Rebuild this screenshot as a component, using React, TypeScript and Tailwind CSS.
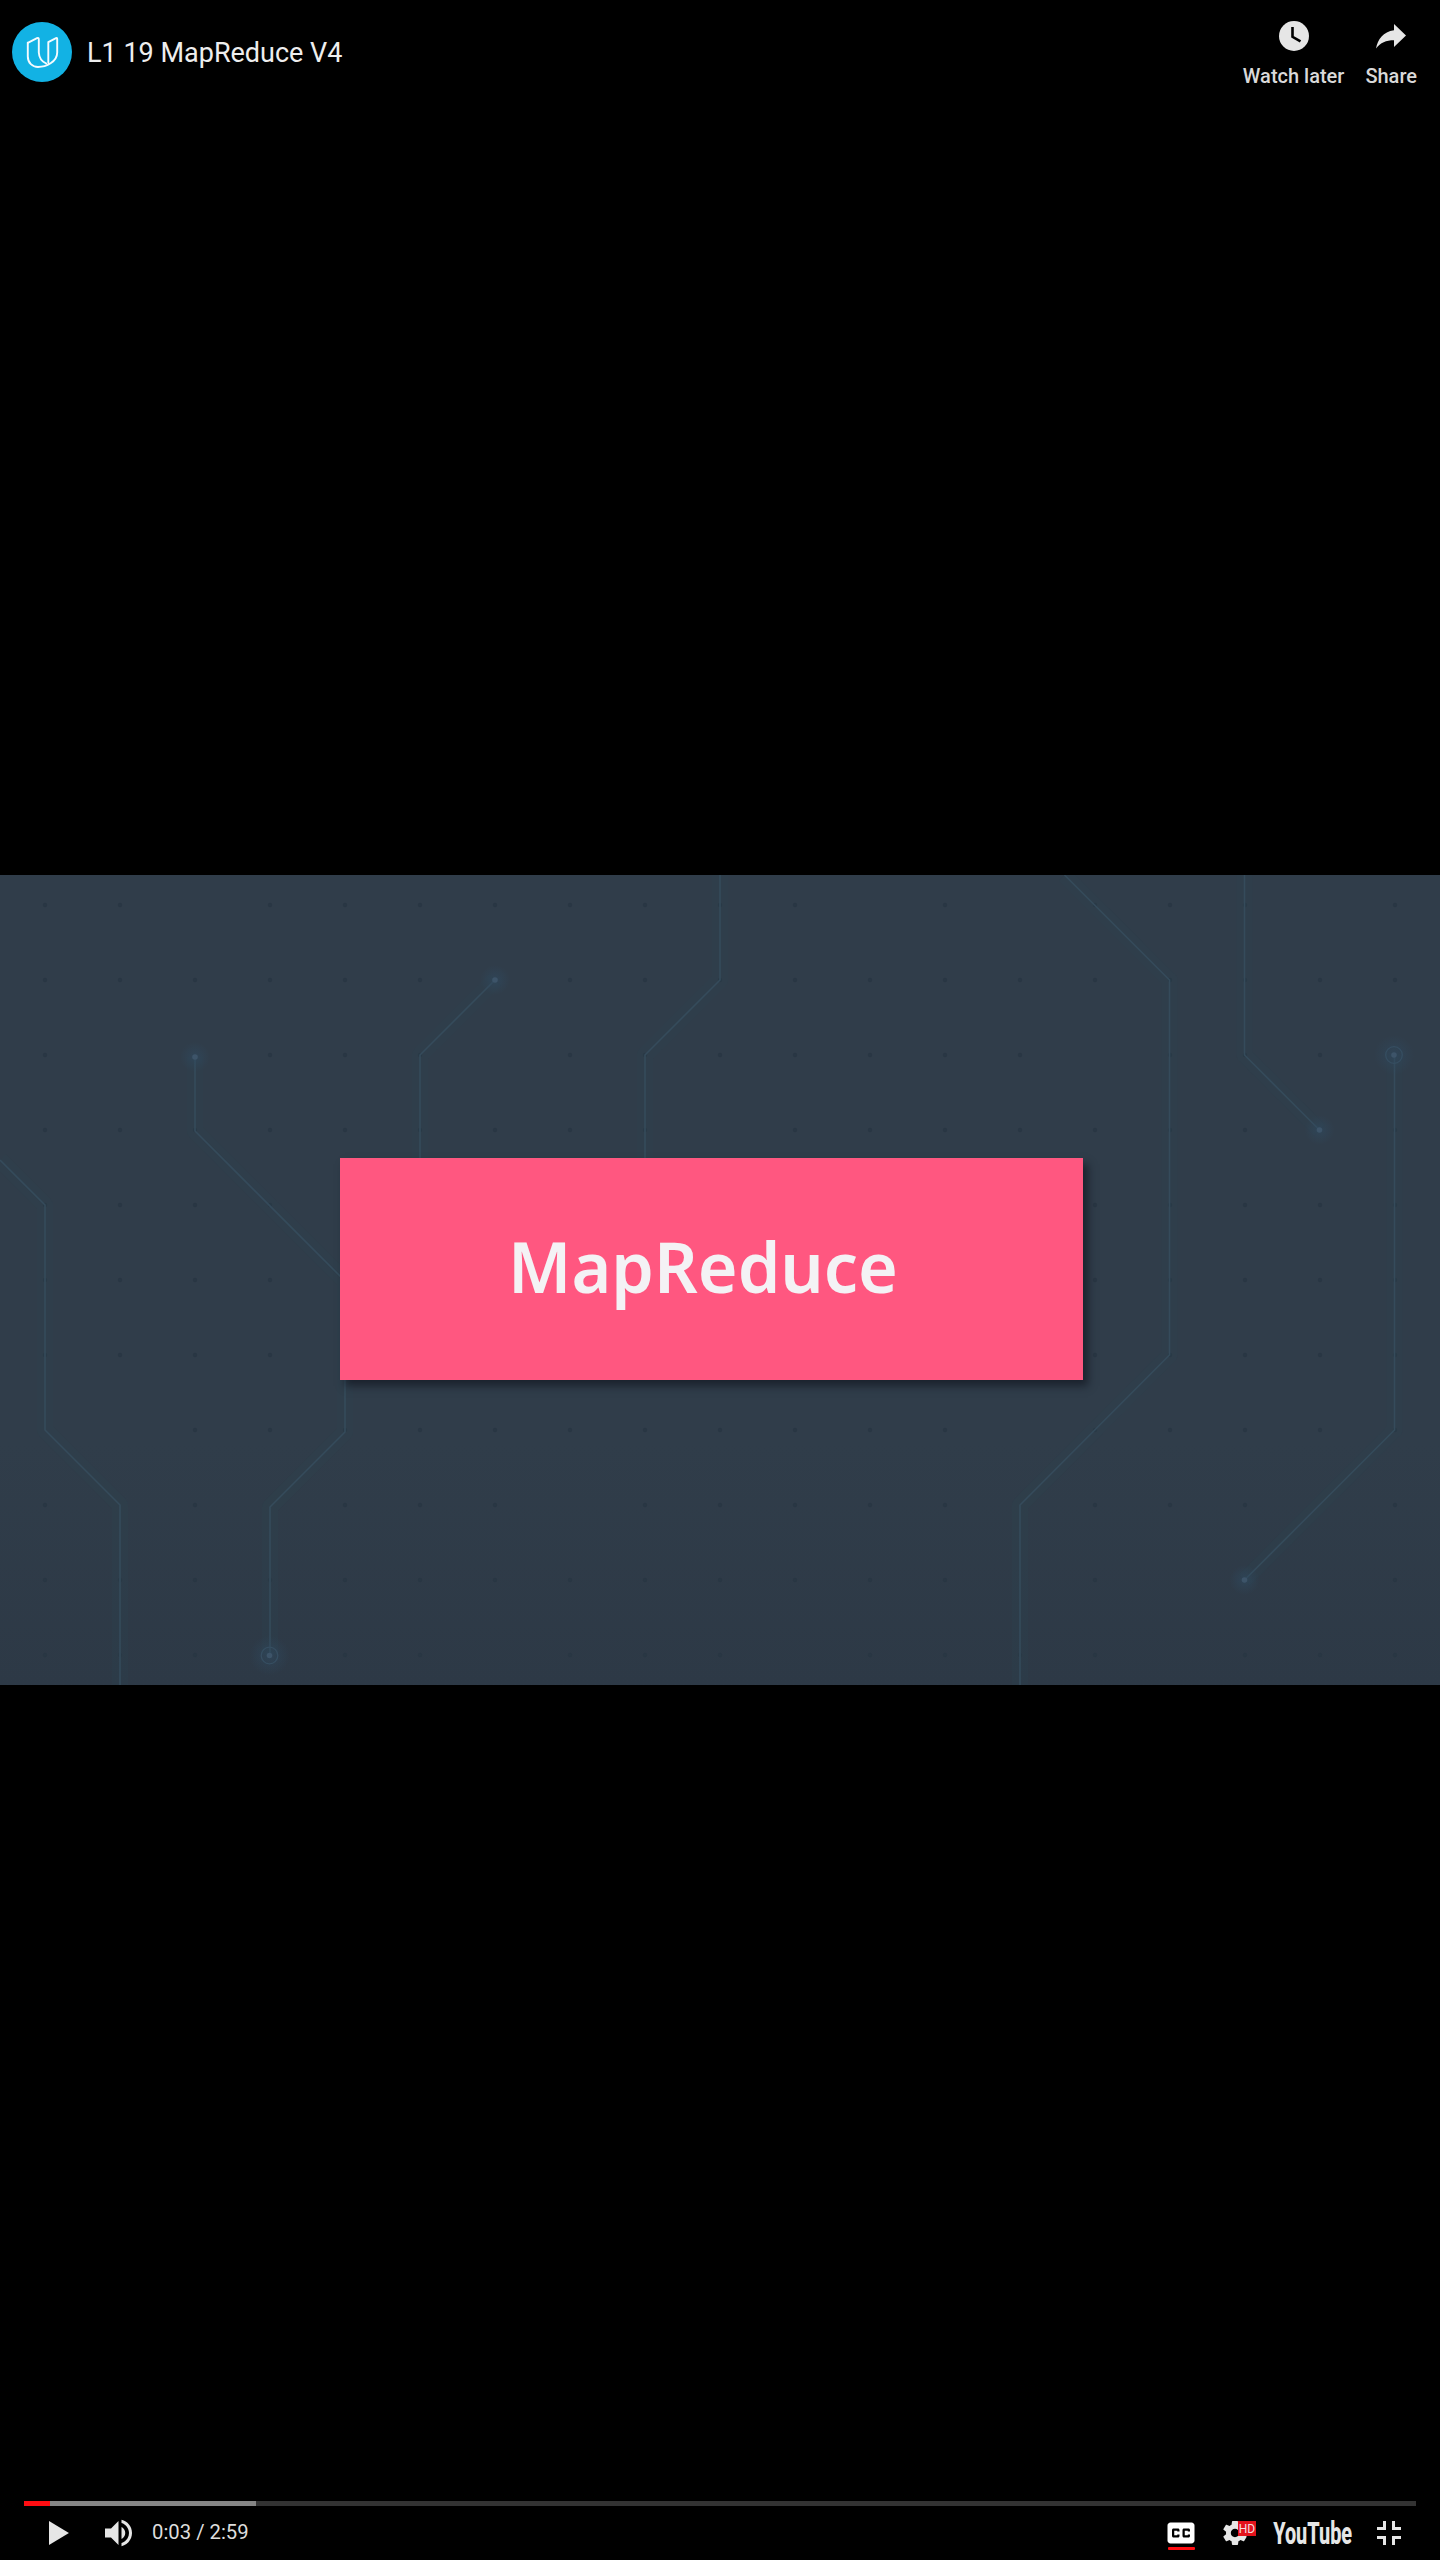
import React from 'react'

const STEP = 75
const COLS = 19
const ROWS = 11

// Grid cells (row -> columns) that carry no dot.
const EMPTY: Record<number, number[]> = {
  0: [2, 11, 13, 17],
  2: [1, 2, 6, 14],
  3: [9],
  7: [0, 1, 13],
  8: [1, 3, 7, 13, 17],
  9: [13, 15, 17],
  10: [6, 10, 15],
}

const TRACES = [
  'M0 285 L45 330 V555 L120 630 V810',
  'M195 182 V256 L345 406 V557 L270 632 V780',
  'M495 105 L420 180 V300',
  'M720 0 V105 L645 180 V300',
  'M1064.5 0 L1169.5 105 V480 L1020 630 V810',
  'M1244.5 0 V180 L1319.5 255',
  'M1394.5 180 V555 L1244.5 705',
]

const NODES = [
  { x: 195, y: 182, ring: false },
  { x: 495, y: 105, ring: false },
  { x: 269.5, y: 780.5, ring: true },
  { x: 1319.5, y: 255, ring: false },
  { x: 1394, y: 180, ring: true },
  { x: 1244.5, y: 705, ring: false },
]

function Circuit() {
  const dots: React.ReactElement[] = []
  for (let r = 0; r < ROWS; r++) {
    for (let c = 0; c < COLS; c++) {
      if (EMPTY[r]?.includes(c)) continue
      dots.push(<circle key={`${r}-${c}`} cx={45 + c * STEP} cy={30 + r * STEP} r="2.2" />)
    }
  }
  return (
    <svg className="absolute inset-0 h-full w-full" viewBox="0 0 1440 810">
      <defs>
        <radialGradient id="glow">
          <stop offset="0" stopColor="#2f4a60" stopOpacity="0.6" />
          <stop offset="1" stopColor="#2f4a60" stopOpacity="0" />
        </radialGradient>
      </defs>
      <g fill="#293744">{dots}</g>
      <g fill="none" strokeLinejoin="round">
        {TRACES.map((d) => (
          <path key={d} d={d} stroke="#2d4250" strokeOpacity="0.25" strokeWidth="16" />
        ))}
        {TRACES.map((d) => (
          <path key={d} d={d} stroke="#354b5b" strokeWidth="1.6" />
        ))}
      </g>
      {NODES.map((n) => (
        <g key={`${n.x}`}>
          <circle cx={n.x} cy={n.y} r={n.ring ? 20 : 15} fill="url(#glow)" />
          {n.ring && <circle cx={n.x} cy={n.y} r="8.3" fill="none" stroke="#364e61" strokeWidth="1.3" />}
          <circle cx={n.x} cy={n.y} r="2.8" fill="#3d5469" />
        </g>
      ))}
    </svg>
  )
}

function ChannelLogo() {
  return (
    <svg viewBox="0 0 60 60" className="h-[60px] w-[60px]">
      <circle cx="30" cy="30" r="30" fill="#12b2e4" />
      <g fill="none" stroke="#f4fbfe" strokeWidth="1.9" strokeLinejoin="round" strokeLinecap="round">
        <path d="M15.8 20.8 L25 16.2 Q26.8 15.4 26.8 17.4 V30.5 Q27.2 38.5 34.4 41.6" />
        <path d="M15.8 20.8 V34.5 C15.8 41 20.5 45 26 45 C34 45 45.2 40 45.2 30.5 V17 Q45.2 15.7 44 16.1 L36.3 20.2 V40.6" />
      </g>
    </svg>
  )
}

function Icon({ d, fill = '#e6e6e6' }: { d: string; fill?: string }) {
  return (
    <svg viewBox="0 0 36 36" className="h-[54px] w-[54px]">
      <path fillRule="evenodd" fill={fill} d={d} />
    </svg>
  )
}

const PLAY = 'M12 10 L25.3 18 L12 26 Z'
const VOLUME =
  'M8 21 L12 21 L17 26 L17 10 L12 15 L8 15 Z M19 14 L19 22 C20.48 21.32 21.5 19.77 21.5 18 C21.5 16.26 20.48 14.74 19 14 Z M19 11.29 C21.89 12.15 24 14.83 24 18 C24 21.17 21.89 23.85 19 24.71 L19 26.77 C23.01 25.86 26 22.28 26 18 C26 13.72 23.01 10.14 19 9.23 Z'
const CC =
  'M11 11 C9.9 11 9 11.9 9 13 L9 23 C9 24.1 9.9 25 11 25 L25 25 C26.1 25 27 24.1 27 23 L27 13 C27 11.9 26.1 11 25 11 Z M17 17 L15.5 17 L15.5 16.5 L13.5 16.5 L13.5 19.5 L15.5 19.5 L15.5 19 L17 19 L17 20 C17 20.55 16.55 21 16 21 L13 21 C12.45 21 12 20.55 12 20 L12 16 C12 15.45 12.45 15 13 15 L16 15 C16.55 15 17 15.45 17 16 Z M24 17 L22.5 17 L22.5 16.5 L20.5 16.5 L20.5 19.5 L22.5 19.5 L22.5 19 L24 19 L24 20 C24 20.55 23.55 21 23 21 L20 21 C19.45 21 19 20.55 19 20 L19 16 C19 15.45 19.45 15 20 15 L23 15 C23.55 15 24 15.45 24 16 Z'
const GEAR =
  'm 23.94,18.78 c .03,-0.25 .05,-0.51 .05,-0.78 0,-0.27 -0.02,-0.52 -0.05,-0.78 l 1.68,-1.32 c .15,-0.12 .19,-0.33 .09,-0.51 l -1.6,-2.76 c -0.09,-0.17 -0.31,-0.24 -0.48,-0.17 l -1.99,.8 c -0.41,-0.32 -0.86,-0.58 -1.35,-0.78 l -0.30,-2.12 c -0.02,-0.19 -0.19,-0.33 -0.39,-0.33 l -3.2,0 c -0.2,0 -0.36,.14 -0.39,.33 l -0.30,2.12 c -0.48,.2 -0.93,.47 -1.35,.78 l -1.99,-0.8 c -0.18,-0.07 -0.39,0 -0.48,.17 l -1.6,2.76 c -0.10,.17 -0.05,.39 .09,.51 l 1.68,1.32 c -0.03,.25 -0.05,.52 -0.05,.78 0,.26 .02,.52 .05,.78 l -1.68,1.32 c -0.15,.12 -0.19,.33 -0.09,.51 l 1.6,2.76 c .09,.17 .31,.24 .48,.17 l 1.99,-0.8 c .41,.32 .86,.58 1.35,.78 l .30,2.12 c .02,.19 .19,.33 .39,.33 l 3.2,0 c .2,0 .36,-0.14 .39,-0.33 l .30,-2.12 c .48,-0.2 .93,-0.47 1.35,-0.78 l 1.99,.8 c .18,.07 .39,0 .48,-0.17 l 1.6,-2.76 c .09,-0.17 .05,-0.39 -0.09,-0.51 l -1.68,-1.32 0,0 z m -5.94,2.01 c -1.54,0 -2.8,-1.25 -2.8,-2.8 0,-1.54 1.25,-2.8 2.8,-2.8 1.54,0 2.8,1.25 2.8,2.8 0,1.54 -1.25,2.8 -2.8,2.8 l 0,0 z'
const EXIT_FULLSCREEN =
  'M14 14 H10 V16 H16 V10 H14 Z M22 14 V10 H20 V16 H26 V14 Z M20 26 H22 V22 H26 V20 H20 Z M10 22 H14 V26 H16 V20 H10 Z'

function Header() {
  return (
    <header className="flex h-[875px] items-start justify-between pl-3 pr-[23px]">
      <div className="flex items-start gap-[15px] pt-[22px]">
        <ChannelLogo />
        <h1 className="pt-px text-[27px] leading-[60px] text-[#eeeeee]">L1 19 MapReduce V4</h1>
      </div>
      <div className="flex gap-[21px] pt-[18px] text-[20px] font-medium leading-6 text-[#d9d9d9]">
        <button className="flex flex-col items-center gap-[10px]">
          <svg viewBox="0 0 36 36" className="h-9 w-9">
            <circle cx="18" cy="18" r="15" fill="#e6e6e6" />
            <path d="M16.5 9 V18.8 L24.5 23.4" fill="none" stroke="#000" strokeWidth="2.6" />
          </svg>
          <span>Watch later</span>
        </button>
        <button className="flex flex-col items-center gap-[10px]">
          <svg viewBox="0 0 36 36" className="h-9 w-9">
            <path
              fill="#e6e6e6"
              d="M21 6 L33 17.5 L21 29 V22.3 C13 22.3 7.5 24.8 3 30.4 C4.8 21.4 10.2 13.6 21 12.2 Z"
            />
          </svg>
          <span>Share</span>
        </button>
      </div>
    </header>
  )
}

function Video() {
  return (
    <main className="relative h-[810px] bg-linear-to-b from-[#303d4a] from-70% to-[#2d3946] pl-[340px] pt-[282.5px]">
      <Circuit />
      <div className="relative flex h-[222px] w-[743px] justify-center bg-[#ff5780] pr-[16px] shadow-[5px_6px_8px_rgba(20,26,36,0.75)]">
        <span className="scale-x-[0.96] pt-[58px] font-['Noto_Sans'] text-[71px] font-semibold leading-[100px] text-[#f4f2f5]">
          MapReduce
        </span>
      </div>
    </main>
  )
}

function Controls() {
  return (
    <footer className="flex h-[875px] flex-col justify-end">
      <div className="mx-6 flex h-[5px] bg-[#333333]">
        <div className="w-[26px] bg-[#ff0d12]" />
        <div className="w-[206px] bg-[#858585]" />
      </div>
      <div className="flex h-[54px] items-center justify-between pl-[31px] pr-6">
        <div className="flex items-center">
          <Icon d={PLAY} />
          <div className="ml-2">
            <Icon d={VOLUME} />
          </div>
          <span className="ml-[5px] pb-px text-[20.3px] leading-[53px] text-[#dddddd]">0:03 / 2:59</span>
        </div>
        <div className="flex items-center">
          <div className="relative">
            <Icon d={CC} fill="#ffffff" />
            <div className="absolute bottom-[10px] left-[14px] h-[3px] w-[27px] rounded-[1px] bg-[#ff0d12]" />
          </div>
          <div className="relative">
            <Icon d={GEAR} />
            <span className="absolute left-[30px] top-[15px] flex h-[15px] w-[18px] items-center justify-center bg-[#e3121b] text-[12px] leading-none text-[#f3dfe0]">
              HD
            </span>
          </div>
          <div className="flex h-[54px] w-[100px] items-center justify-center pl-[2px]">
            <span className="-mx-8 scale-x-[0.62] text-[32px] font-extrabold leading-[54px] text-[#e6e6e6]">
              YouTube
            </span>
          </div>
          <Icon d={EXIT_FULLSCREEN} />
        </div>
      </div>
    </footer>
  )
}

export default function App() {
  return (
    <div className="h-[2560px] w-[1440px] overflow-hidden bg-black font-['Roboto',sans-serif]">
      <Header />
      <Video />
      <Controls />
    </div>
  )
}
